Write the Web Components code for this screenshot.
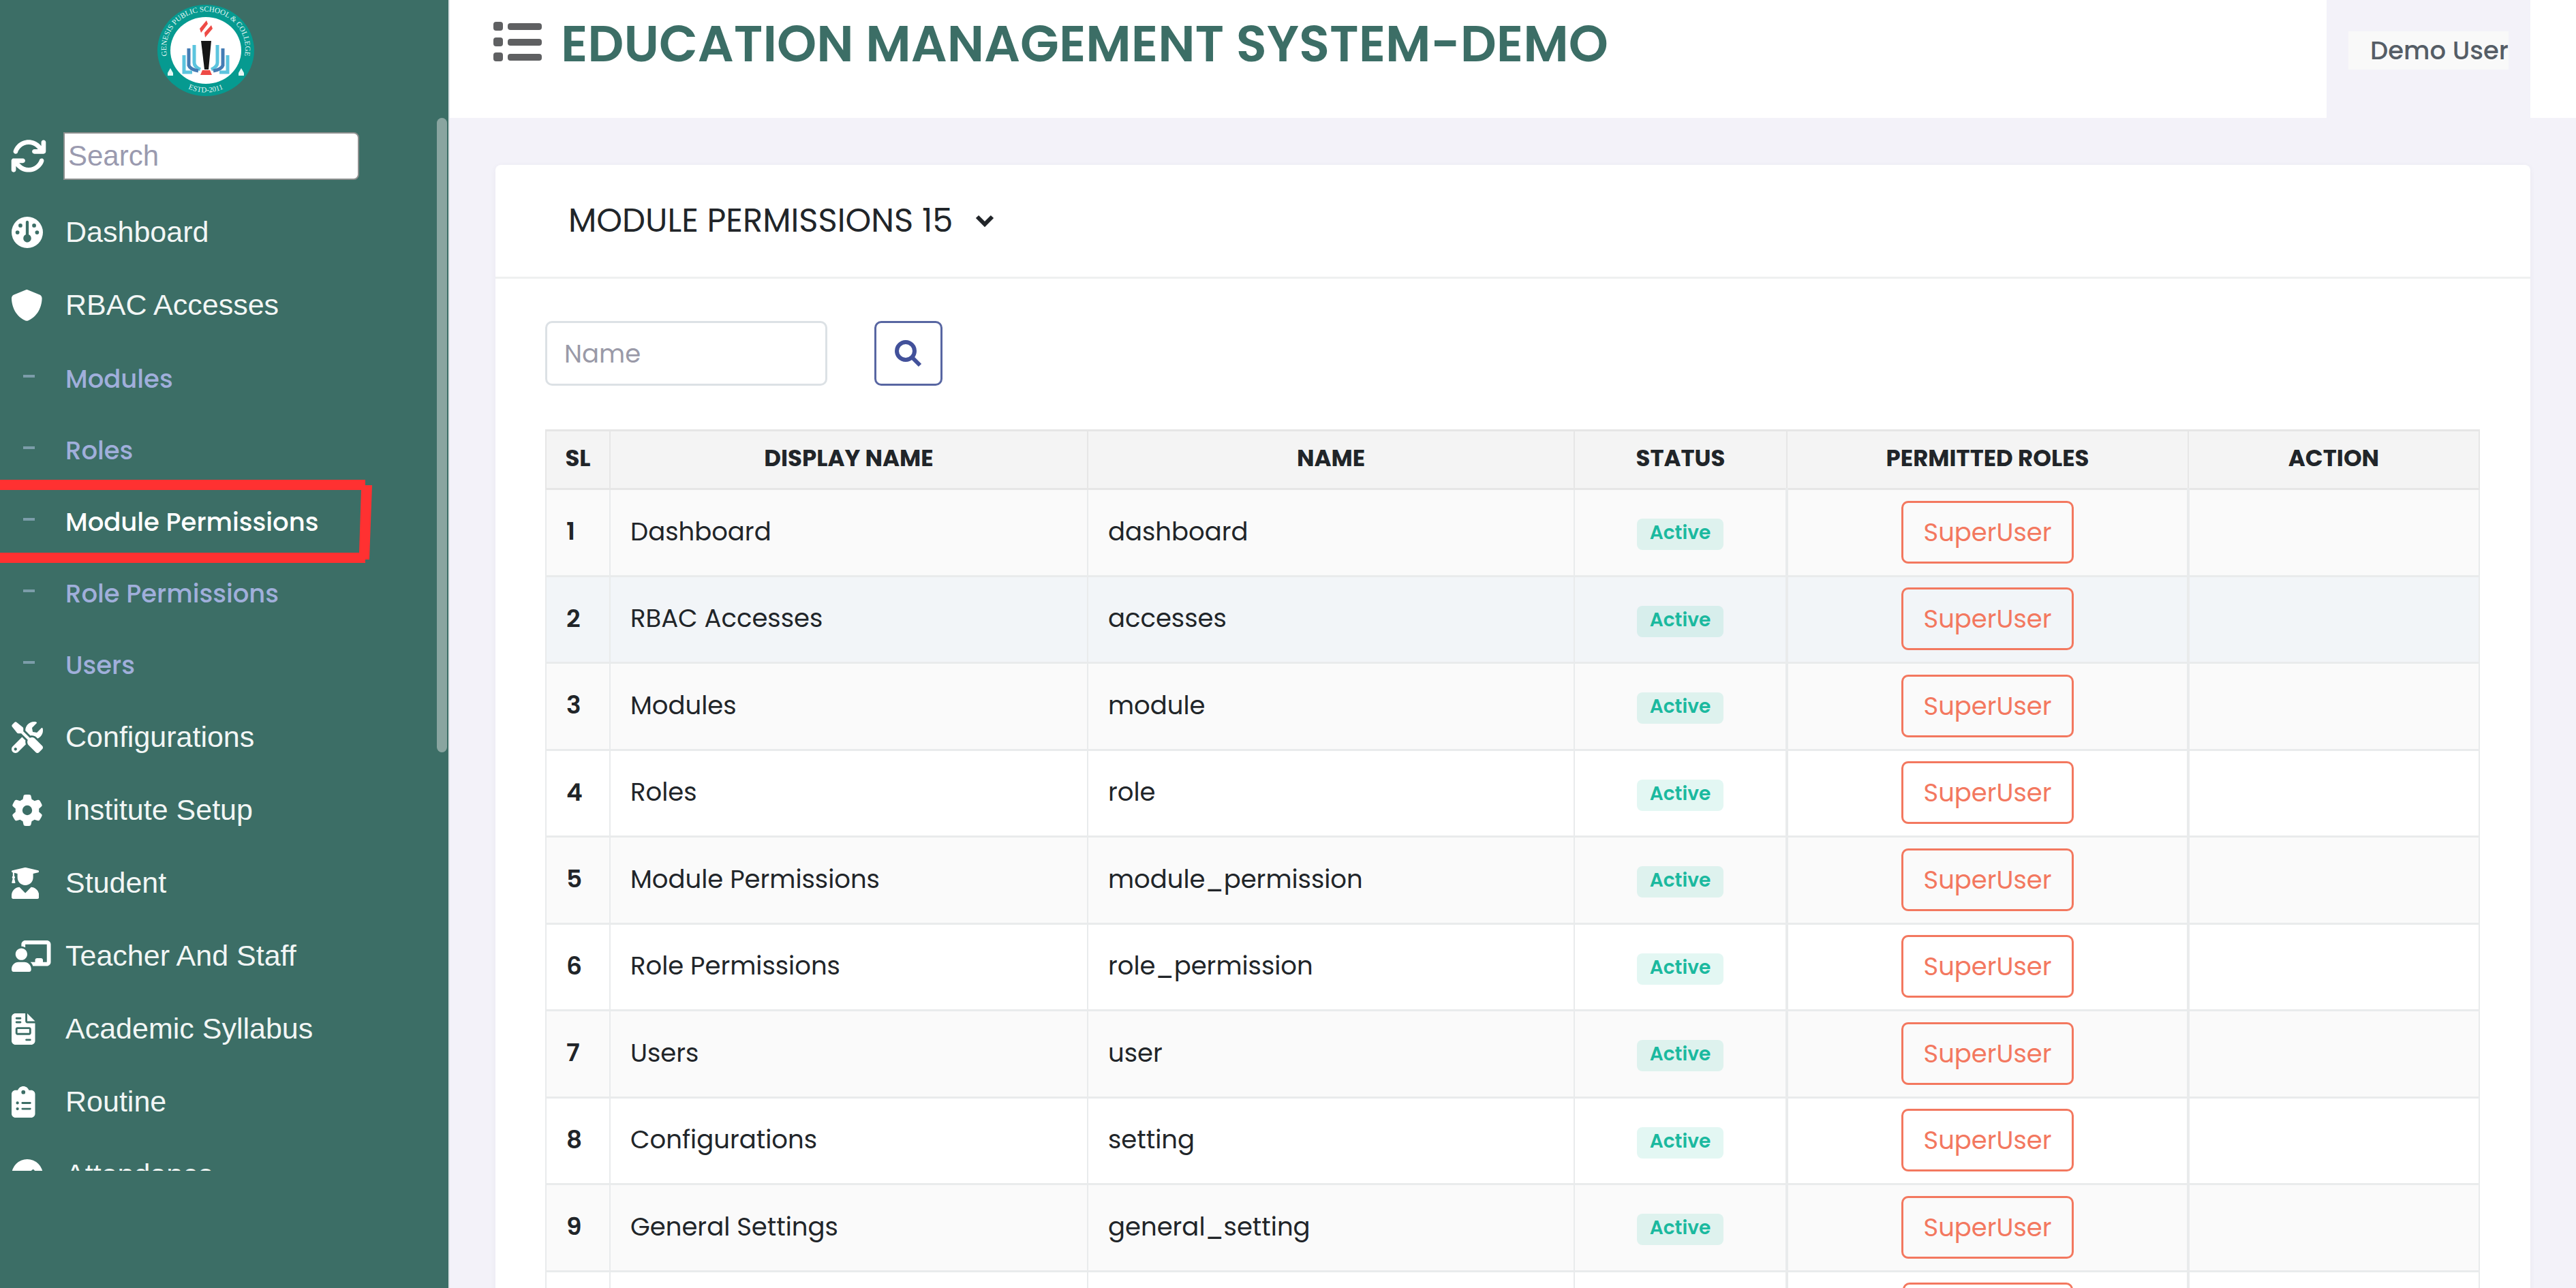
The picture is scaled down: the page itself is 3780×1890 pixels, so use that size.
<!DOCTYPE html>
<html lang="en">
<head>
<meta charset="utf-8">
<title>Education Management System - Module Permissions</title>
<style>
  html, body { margin: 0; height: 100%; }
  body {
    background: #f3f2f9;
    color: #212529;
    font-family: Poppins, Inter, "Open Sans", sans-serif;
    overflow: hidden;
  }
</style>
</head>
<body>
<ems-app>
  <ems-sidebar slot="sidebar">
    <ems-nav-item icon="gauge">Dashboard</ems-nav-item>
    <ems-nav-item icon="shield">RBAC Accesses</ems-nav-item>
    <ems-subnav>
      <ems-subnav-item>Modules</ems-subnav-item>
      <ems-subnav-item>Roles</ems-subnav-item>
      <ems-subnav-item active>Module Permissions</ems-subnav-item>
      <ems-subnav-item>Role Permissions</ems-subnav-item>
      <ems-subnav-item>Users</ems-subnav-item>
    </ems-subnav>
    <ems-nav-item icon="tools">Configurations</ems-nav-item>
    <ems-nav-item icon="gear">Institute Setup</ems-nav-item>
    <ems-nav-item icon="graduate">Student</ems-nav-item>
    <ems-nav-item icon="teacher">Teacher And Staff</ems-nav-item>
    <ems-nav-item icon="invoice">Academic Syllabus</ems-nav-item>
    <ems-nav-item icon="clipboard">Routine</ems-nav-item>
    <ems-nav-item icon="check">Attendance</ems-nav-item>
  </ems-sidebar>
  <ems-topbar slot="topbar" user="Demo User">EDUCATION MANAGEMENT SYSTEM-DEMO</ems-topbar>
  <ems-card>
    <span slot="title">MODULE PERMISSIONS 15</span>
    <ems-filter></ems-filter>
    <ems-permission-table></ems-permission-table>
  </ems-card>
</ems-app>

<script>
const ICONS = {
  refresh: [512, 'M105.1 202.6c7.7-21.8 20.2-42.3 37.8-59.8c62.5-62.5 163.8-62.5 226.3 0L386.3 160H336c-17.7 0-32 14.3-32 32s14.3 32 32 32H463.500h.4c17.700 0 32-14.300 32-32V64c0-17.700-14.300-32-32-32s-32 14.300-32 32v51.200L414.400 97.600c-87.500-87.500-229.300-87.500-316.800 0C73.200 122 55.600 150.700 44.800 181.400c-5.900 16.700 2.900 34.900 19.500 40.800s34.900-2.900 40.800-19.500zM39 289.300c-5 1.500-9.800 4.200-13.700 8.200c-4 4-6.700 8.800-8.100 14c-.3 1.200-.6 2.500-.8 3.800c-.3 1.700-.4 3.400-.4 5.100V448c0 17.700 14.300 32 32 32s32-14.300 32-32V396.900l17.600 17.500c87.500 87.400 229.300 87.400 316.700 0c24.400-24.400 42.100-53.100 52.900-83.700c5.900-16.700-2.900-34.900-19.500-40.800s-34.900 2.900-40.800 19.500c-7.700 21.800-20.200 42.300-37.800 59.800c-62.500 62.500-163.800 62.500-226.300 0l-.1-.1L125.600 352H176c17.700 0 32-14.300 32-32s-14.300-32-32-32H48.400c-1.600 0-3.200 .1-4.800 .3s-3.100 .5-4.600 1z'],
  gauge: [512, 'M0 256a256 256 0 1 1 512 0A256 256 0 1 1 0 256zm320 96c0-26.900-16.500-49.900-40-59.300V88c0-13.300-10.700-24-24-24s-24 10.700-24 24V292.700c-23.500 9.500-40 32.500-40 59.300c0 35.300 28.700 64 64 64s64-28.700 64-64zM144 176a32 32 0 1 0 0-64 32 32 0 1 0 0 64zm-16 80a32 32 0 1 0 -64 0 32 32 0 1 0 64 0zm288 32a32 32 0 1 0 0-64 32 32 0 1 0 0 64zM400 144a32 32 0 1 0 -64 0 32 32 0 1 0 64 0z'],
  shield: [496, 'M248 0c-5 0-9 1-13 3L38 83C16 92 0 114 0 140c.5 99 41 281 221 363.500 17 8 37 8 54 0C455 421 496 239 496 140c.1-26-16-48-38-57L261 3c-4-2-8-3-13-3z'],
  tools: [512, 'M501.1 395.7L384 278.6c-23.1-23.1-57.6-27.6-85.4-13.9L192 158.1V110c0-9-4-17-11-22L84 10C72 1 58 2 48 12L12 48C2 58 1 72 10 84l78 97c5 7 13 11 22 11h48.100l106.600 106.600c-13.600 27.800-9.200 62.300 13.900 85.400l117.100 117.100c14.600 14.600 38.200 14.600 52.700 0l52.700-52.700c14.500-14.600 14.500-38.200 0-52.700zM331.700 225c28.300 0 54.900 11 74.900 31l19.400 19.400c15.800-6.900 30.800-16.500 43.800-29.500 37.100-37.100 49.700-89.300 37.900-136.700-2.200-9-13.500-12.100-20.100-5.500l-74.400 74.400-67.900-11.300L334 98.900l74.400-74.400c6.600-6.600 3.400-17.900-5.700-20.200-47.400-11.700-99.600.9-136.600 37.900-28.500 28.500-41.900 66.100-41.200 103.600l82.100 82.100c8.100-1.900 16.500-2.900 24.700-2.900zm-103.900 82l-56.700-56.700L18.700 402.800c-25 25-25 65.500 0 90.500s65.500 25 90.500 0l123.600-123.600c-7.600-19.900-9.900-41.600-5-62.700zM64 472c-13.200 0-24-10.800-24-24 0-13.300 10.700-24 24-24s24 10.700 24 24c0 13.200-10.700 24-24 24z'],
  gear: [512, 'M495.9 166.6c3.2 8.7 .5 18.4-6.4 24.6l-43.3 39.4c1.1 8.3 1.7 16.8 1.7 25.4s-.6 17.1-1.7 25.4l43.3 39.4c6.9 6.2 9.6 15.9 6.4 24.6c-4.4 11.9-9.7 23.3-15.8 34.3l-4.7 8.1c-6.6 11-14 21.4-22.1 31.2c-5.9 7.2-15.7 9.6-24.5 6.8l-55.7-17.7c-13.4 10.3-28.2 18.9-44 25.4l-12.5 57.1c-2 9.1-9 16.3-18.2 17.8c-13.8 2.3-28 3.5-42.5 3.5s-28.7-1.2-42.5-3.5c-9.2-1.5-16.2-8.7-18.2-17.8l-12.500-57.100c-15.800-6.500-30.600-15.100-44-25.400L83.100 425.900c-8.800 2.800-18.600 .3-24.500-6.800c-8.100-9.800-15.500-20.200-22.100-31.200l-4.700-8.100c-6.100-11-11.400-22.400-15.800-34.300c-3.200-8.700-.5-18.400 6.400-24.600l43.300-39.400C64.600 273.100 64 264.600 64 256s.6-17.100 1.700-25.400L22.400 191.200c-6.900-6.200-9.600-15.900-6.400-24.600c4.400-11.900 9.700-23.300 15.800-34.300l4.700-8.100c6.600-11 14-21.400 22.100-31.200c5.900-7.200 15.700-9.600 24.500-6.800l55.700 17.700c13.400-10.300 28.200-18.900 44-25.400l12.500-57.100c2-9.100 9-16.300 18.200-17.800C227.300 1.200 241.500 0 256 0s28.700 1.200 42.500 3.500c9.200 1.500 16.200 8.700 18.200 17.800l12.500 57.100c15.800 6.500 30.600 15.100 44 25.400l55.700-17.700c8.800-2.800 18.600-.3 24.500 6.800c8.100 9.800 15.500 20.200 22.100 31.200l4.700 8.100c6.100 11 11.400 22.400 15.800 34.300zM256 336a80 80 0 1 0 0-160 80 80 0 1 0 0 160z'],
  graduate: [448, 'M319.4 320.6L224 416l-95.4-95.4C57.1 323.7 0 382.2 0 454.4v33.600c0 13 11 24 24 24h400c13 0 24-11 24-24v-33.600c0-72.200-57.100-130.700-128.600-133.800zM13.600 79.800l6.400 1.500v58.400c-7 4.200-12 11.500-12 20.300 0 8.400 4.600 15.400 11.100 19.700L3.500 242c-1.700 6.900 2.100 14 7.600 14h41.800c5.500 0 9.300-7.100 7.600-14l-15.600-62.300C51.400 175.400 56 168.400 56 160c0-8.800-5-16.100-12-20.300V87.100l52 12v60.900c0 70.700 57.300 128 128 128s128-57.300 128-128V99.100l82.300-19.300c18.200-4.400 18.200-27.100 0-31.500l-190.400-46c-13-3.100-26.700-3.100-39.700 0L13.600 48.200c-18.100 4.400-18.100 27.200 0 31.600z'],
  teacher: [640, 'M208 352H112C49.940 352-.33 402.480 0 470c.14 26 10 42 32 42h256c22 0 32-16 32-42 .33-67.500-49.940-118-112-118zm-48-32c53.020 0 96-42.980 96-96s-42.980-96-96-96-96 42.980-96 96 42.980 96 96 96zM576 0H224c-35 0-64 28.700-64 64v32c23.420 0 45.100 6.780 64 17.800V64h352v288h-64v-32c0-18-14-32-32-32h-64c-18 0-32 14-32 32v32h-76.240c19.100 16.690 33.120 38.730 39.690 64H576c35 0 64-28.700 64-64V64C640 28.700 611 0 576 0z'],
  invoice: [384, 'M288 256H96v64h192v-64zM384 128H256V0zM224 128V0H64C28.700 0 0 28.700 0 64v384c0 35.300 28.700 64 64 64h256c35.300 0 64-28.700 64-64V160H256c-17.700 0-32-14.300-32-32zM64 80c0-8.800 7.200-16 16-16h64c8.800 0 16 7.200 16 16s-7.200 16-16 16H80c-8.800 0-16-7.200-16-16zm0 64c0-8.800 7.200-16 16-16h64c8.800 0 16 7.200 16 16s-7.200 16-16 16H80c-8.800 0-16-7.200-16-16zm256 288c0 8.800-7.200 16-16 16h-64c-8.800 0-16-7.200-16-16s7.200-16 16-16h64c8.800 0 16 7.200 16 16zm0-176v64c0 17.700-14.300 32-32 32H96c-17.700 0-32-14.300-32-32v-64c0-17.700 14.300-32 32-32h192c17.700 0 32 14.300 32 32z'],
  clipboard: [384, 'M192 0c-41.800 0-77.400 26.700-90.500 64H64C28.700 64 0 92.700 0 128v320c0 35.300 28.700 64 64 64h256c35.300 0 64-28.700 64-64V128c0-35.300-28.700-64-64-64h-37.500C269.400 26.700 233.800 0 192 0zm0 64a32 32 0 1 1 0 64 32 32 0 1 1 0-64zM72 272a24 24 0 1 1 48 0 24 24 0 1 1-48 0zm104-16h128c8.800 0 16 7.200 16 16s-7.200 16-16 16H176c-8.800 0-16-7.200-16-16s7.200-16 16-16zM72 368a24 24 0 1 1 48 0 24 24 0 1 1-48 0zm88 0c0-8.800 7.200-16 16-16h128c8.800 0 16 7.200 16 16s-7.200 16-16 16H176c-8.800 0-16-7.200-16-16z'],
  check: [512, 'M256 512A256 256 0 1 0 256 0a256 256 0 1 0 0 512zM369 209L241 337c-9.400 9.400-24.600 9.400-33.900 0l-64-64c-9.400-9.400-9.400-24.600 0-33.900s24.600-9.400 33.900 0l47 47L335 175c9.400-9.400 24.600-9.400 33.900 0s9.400 24.600 0 33.900z']
};

/* Base class: clones its markup and styles into an open shadow root. */
class EmsElement extends HTMLElement {
  connectedCallback() {
    if (this.shadowRoot) return;
    this.attachShadow({ mode: 'open' }).innerHTML = this.render();
  }
  render() { return '<slot></slot>'; }
}

customElements.define('ems-icon', class extends EmsElement {
  render() {
    const [w, d] = ICONS[this.getAttribute('name')];
    return `<style>
      :host { display: block; height: 46px; flex: none; }
      svg { display: block; height: 100%; width: auto; fill: currentColor; fill-rule: evenodd; }
    </style><svg viewBox="0 0 ${w} 512" aria-hidden="true"><path d="${d}"/></svg>`;
  }
});

customElements.define('ems-logo', class extends EmsElement {
  render() {
    return `<style>
      :host { display: block; }
      svg { display: block; width: 142px; height: 136px; }
      text { font-family: "Liberation Serif", serif; font-size: 11px; fill: #e4f7f5; text-anchor: middle; }
    </style>
    <svg viewBox="0 0 142 136" role="img" aria-label="School logo">
      <ellipse cx="71" cy="68" rx="71" ry="67" fill="#069a90"/>
      <ellipse cx="71" cy="68" rx="52" ry="49" fill="#fff"/>
      <path id="top" d="M16 82A58 54 0 1 1 126 82" fill="none"/>
      <path id="bottom" d="M20 105A64 62 0 0 0 122 105" fill="none"/>
      <text><textPath href="#top" startOffset="50%">GENESIS PUBLIC SCHOOL &amp; COLLEGE</textPath></text>
      <text><textPath href="#bottom" startOffset="50%">ESTD-2011</textPath></text>
      <path d="M19 94l4 7v4h-8v-4zM123 94l4 7v4h-8v-4z" fill="#e4f7f5"/>
      <path d="M64 54h15l-4 42h-6z" fill="#161616"/>
      <path d="M66 97h11l3 7H63z" fill="#ee4b46"/>
      <path d="M72 24l2 5-10 13-2-6zM79 31l2 5-11 13-1-7z" fill="#ee4b46"/>
      <g fill="none" stroke-width="5">
        <path d="M54 60v26q0 6 9 10M88 60v26q0 6-9 10" stroke="#5cc4de"/>
        <path d="M46 65v25q2 6 14 8M96 65v25q-2 6-14 8" stroke="#447cb4"/>
        <path d="M39 75v25h12M103 75v25H91" stroke="#5cc4de"/>
      </g>
    </svg>`;
  }
});

customElements.define('ems-nav-item', class extends EmsElement {
  render() {
    return `<style>
      :host { display: block; }
      a { display: flex; align-items: center; height: 107px; padding-left: 17px; color: #f2f6f5;
          font: 43px "Liberation Sans", Arial, sans-serif; text-decoration: none; white-space: nowrap; }
      .icon { width: 79px; flex: none; color: #fff; }
    </style>
    <a href="#"><span class="icon"><ems-icon name="${this.getAttribute('icon')}"></ems-icon></span><slot></slot></a>`;
  }
});

customElements.define('ems-subnav', class extends EmsElement {
  render() {
    return `<style>:host { display: flex; flex-direction: column; padding-top: 2px; }</style><slot></slot>`;
  }
});

customElements.define('ems-subnav-item', class extends EmsElement {
  render() {
    const mark = this.hasAttribute('active')
      ? `<svg viewBox="0 0 546 122" aria-hidden="true"><path d="M0 0h536v8h10l-4 109h-6v5H0v-15h527l3-92H0z"/></svg>` : '';
    return `<style>
      :host { display: block; position: relative; }
      a { display: flex; align-items: center; height: 105px; padding-left: 34px; color: #a0afdb;
          font-size: 37px; font-weight: 500; text-decoration: none; white-space: nowrap; }
      a::before { content: ""; width: 17px; height: 4px; margin: 0 45px 8px 0; background: #7c9daa; }
      :host([active]) a { color: #fff; }
      svg { position: absolute; left: 0; top: -9px; width: 546px; height: 122px; fill: #ff3131; }
    </style>
    <a href="#"><slot></slot></a>${mark}`;
  }
});

customElements.define('ems-sidebar', class extends EmsElement {
  render() {
    return `<style>
      :host { display: flex; flex-direction: column; box-sizing: border-box; width: 660px; height: 100%;
              background: #3c6e66; border-right: 2px solid #dfe5e8; }
      .brand { display: flex; justify-content: center; box-sizing: border-box; height: 173px; padding: 6px 54px 0 0; flex: none; }
      .scroll { position: relative; flex: 1; margin-bottom: 172px; overflow: hidden; }
      .search { display: flex; align-items: center; height: 111px; padding: 0 0 3px 15px; color: #fff; }
      .search ems-icon { height: 54px; width: 78px; }
      input { box-sizing: border-box; width: 434px; height: 70px; padding: 0 5px; border: 2px solid #8c8f8e;
              border-radius: 0 8px 8px 0; background: #fff; font: 42px "Liberation Sans", Arial, sans-serif; outline: 0; }
      input::placeholder { color: #9a9aaf; }
      .thumb { position: absolute; right: 2px; top: 0; width: 15px; height: 931px; border-radius: 8px; background: #89a5a0; }
    </style>
    <div class="brand"><ems-logo></ems-logo></div>
    <nav class="scroll">
      <div class="search"><ems-icon name="refresh"></ems-icon><input type="text" placeholder="Search" aria-label="Search menu"></div>
      <slot></slot>
      <div class="thumb"></div>
    </nav>`;
  }
});

customElements.define('ems-topbar', class extends EmsElement {
  render() {
    return `<style>
      :host { display: flex; align-items: flex-start; height: 173px; padding: 0 67px 0 63px; background: #fff; }
      .toggle { display: block; margin: 31px 28px 0 0; padding: 0; border: 0; background: none; color: #5f6062; }
      .toggle svg { display: block; width: 72px; height: 60px; fill: currentColor; }
      h1 { flex: 1; margin: 0; color: #3c6e66; font-size: 74px; line-height: 128px; font-weight: 600; white-space: nowrap; }
      .user { align-self: stretch; padding: 46px 32px 0; background: #f3f2f9; }
      .user button { display: block; height: 56px; padding: 0 0 0 32px; border: 0; background: #f9f9f9; color: #555d66;
                     font: inherit; font-size: 37px; font-weight: 500; line-height: 56px; white-space: nowrap; }
    </style>
    <button class="toggle" type="button" aria-label="Toggle menu">
      <svg viewBox="0 0 72 60" aria-hidden="true">
        <rect x="1" y="1" width="14" height="13" rx="4"/><rect x="1" y="24" width="14" height="13" rx="4"/><rect x="1" y="46" width="14" height="13" rx="4"/>
        <rect x="22" y="3" width="50" height="10" rx="4"/><rect x="22" y="26" width="50" height="10" rx="4"/><rect x="22" y="48" width="50" height="10" rx="4"/>
      </svg>
    </button>
    <h1><slot></slot></h1>
    <div class="user"><button type="button">${this.getAttribute('user')}</button></div>`;
  }
});

customElements.define('ems-card', class extends EmsElement {
  render() {
    return `<style>
      :host { display: block; border-radius: 8px; background: #fff; box-shadow: 0 2px 8px rgba(60, 60, 110, .06); }
      header { display: flex; align-items: center; gap: 33px; height: 164px; padding-left: 107px; border-bottom: 3px solid #eef0f0; }
      h2 { margin: 0; font-size: 48px; font-weight: 400; white-space: nowrap; }
      button { padding: 0; border: 0; background: none; color: #212529; }
      svg { display: block; width: 28px; height: 20px; }
      .body { display: flex; flex-direction: column; gap: 64px; padding: 62px 77px 62px 73px; }
    </style>
    <header>
      <h2><slot name="title"></slot></h2>
      <button type="button" aria-label="Show options"><svg viewBox="0 0 28 20" fill="none" stroke="currentColor" stroke-width="6" aria-hidden="true"><path d="M3 4l11 11L25 4"/></svg></button>
    </header>
    <div class="body"><slot></slot></div>`;
  }
});

customElements.define('ems-filter', class extends EmsElement {
  render() {
    return `<style>
      :host { display: block; }
      form { display: flex; gap: 69px; }
      input { box-sizing: border-box; width: 414px; height: 95px; padding: 0 25px; border: 3px solid #dce1e5; border-radius: 10px;
              background: #fff; font: inherit; font-size: 37px; outline: 0; }
      input::placeholder { color: #9a9aa8; }
      button { display: flex; align-items: center; justify-content: center; box-sizing: border-box; width: 100px; height: 95px;
               padding: 0; border: 3px solid #5866a2; border-radius: 10px; background: #fff; color: #42519a; }
      svg { width: 40px; height: 40px; }
    </style>
    <form>
      <input type="text" placeholder="Name" aria-label="Name">
      <button type="button" aria-label="Search"><svg viewBox="0 0 40 40" fill="none" stroke="currentColor" stroke-width="6" aria-hidden="true"><circle cx="16" cy="16" r="13"/><path d="M25 25l12 12"/></svg></button>
    </form>`;
  }
});

customElements.define('ems-badge', class extends EmsElement {
  render() {
    return `<style>
      :host { display: inline-block; box-sizing: border-box; padding: 0 19px 4px; border-radius: 8px; background: rgba(26, 187, 160, .12);
              color: #1bb99f; font-size: 28px; line-height: 42px; font-weight: 600; vertical-align: middle; }
    </style><slot></slot>`;
  }
});

customElements.define('ems-role-button', class extends EmsElement {
  render() {
    return `<style>
      :host { display: block; }
      button { box-sizing: border-box; display: block; margin: 0 auto; height: 92px; padding: 0 29px; border: 3px solid #f3785f; border-radius: 10px;
               background: none; color: #f3785f; font: inherit; font-size: 37px; }
    </style><button type="button"><slot></slot></button>`;
  }
});

customElements.define('ems-permission-table', class extends EmsElement {
  render() {
    const rows = [
      ['Dashboard', 'dashboard'], ['RBAC Accesses', 'accesses'], ['Modules', 'module'], ['Roles', 'role'],
      ['Module Permissions', 'module_permission'], ['Role Permissions', 'role_permission'], ['Users', 'user'],
      ['Configurations', 'setting'], ['General Settings', 'general_setting'], ['', '']
    ];
    const body = rows.map(([label, name], i) => `<tr>
      <th scope="row">${label ? i + 1 : ''}</th><td>${label}</td><td>${name}</td>
      <td class="status">${label ? '<ems-badge>Active</ems-badge>' : ''}</td>
      <td class="roles"><ems-role-button>${label ? 'SuperUser' : '<span style="display:block;width:186px"></span>'}</ems-role-button></td><td></td></tr>`).join('');
    return `<style>
      :host { display: block; }
      table { width: 100%; table-layout: fixed; border-collapse: collapse; font-size: 37px; }
      th, td { box-sizing: border-box; padding: 0 0 4px 29px; border: 2px solid #e9ebec; border-width: 3px 2px; text-align: left; white-space: nowrap; }
      thead th { height: 86px; padding: 0 0 4px; background: #f4f4f4; border-color: #e6e6e6; font-size: 34px; font-weight: 700; text-align: center; }
      tbody th { font-size: 36px; font-weight: 600; }
      tbody tr { height: 127px; }
      tbody tr:nth-child(odd) { height: 128px; background: #fafafa; }
      tbody tr:nth-child(2) { background: #f2f5f8; }
      td.status { padding: 0; text-align: center; }
      td.roles { padding: 0 0 2px; border-left-width: 4px; border-right-width: 4px; }
    </style>
    <table>
      <colgroup><col style="width:94px"><col style="width:701px"><col style="width:714px"><col style="width:312px"><col style="width:589px"><col style="width:427px"></colgroup>
      <thead><tr><th scope="col">SL</th><th scope="col">DISPLAY NAME</th><th scope="col">NAME</th><th scope="col">STATUS</th><th scope="col">PERMITTED ROLES</th><th scope="col">ACTION</th></tr></thead>
      <tbody>${body}</tbody>
    </table>`;
  }
});

customElements.define('ems-app', class extends EmsElement {
  render() {
    return `<style>
      :host { display: flex; height: 100vh; overflow: hidden; }
      aside { flex: none; height: 100%; }
      .page { flex: 1; min-width: 0; }
      main { padding: 69px 67px 0; }
    </style>
    <aside><slot name="sidebar"></slot></aside>
    <div class="page"><slot name="topbar"></slot><main><slot></slot></main></div>`;
  }
});
</script>
</body>
</html>
